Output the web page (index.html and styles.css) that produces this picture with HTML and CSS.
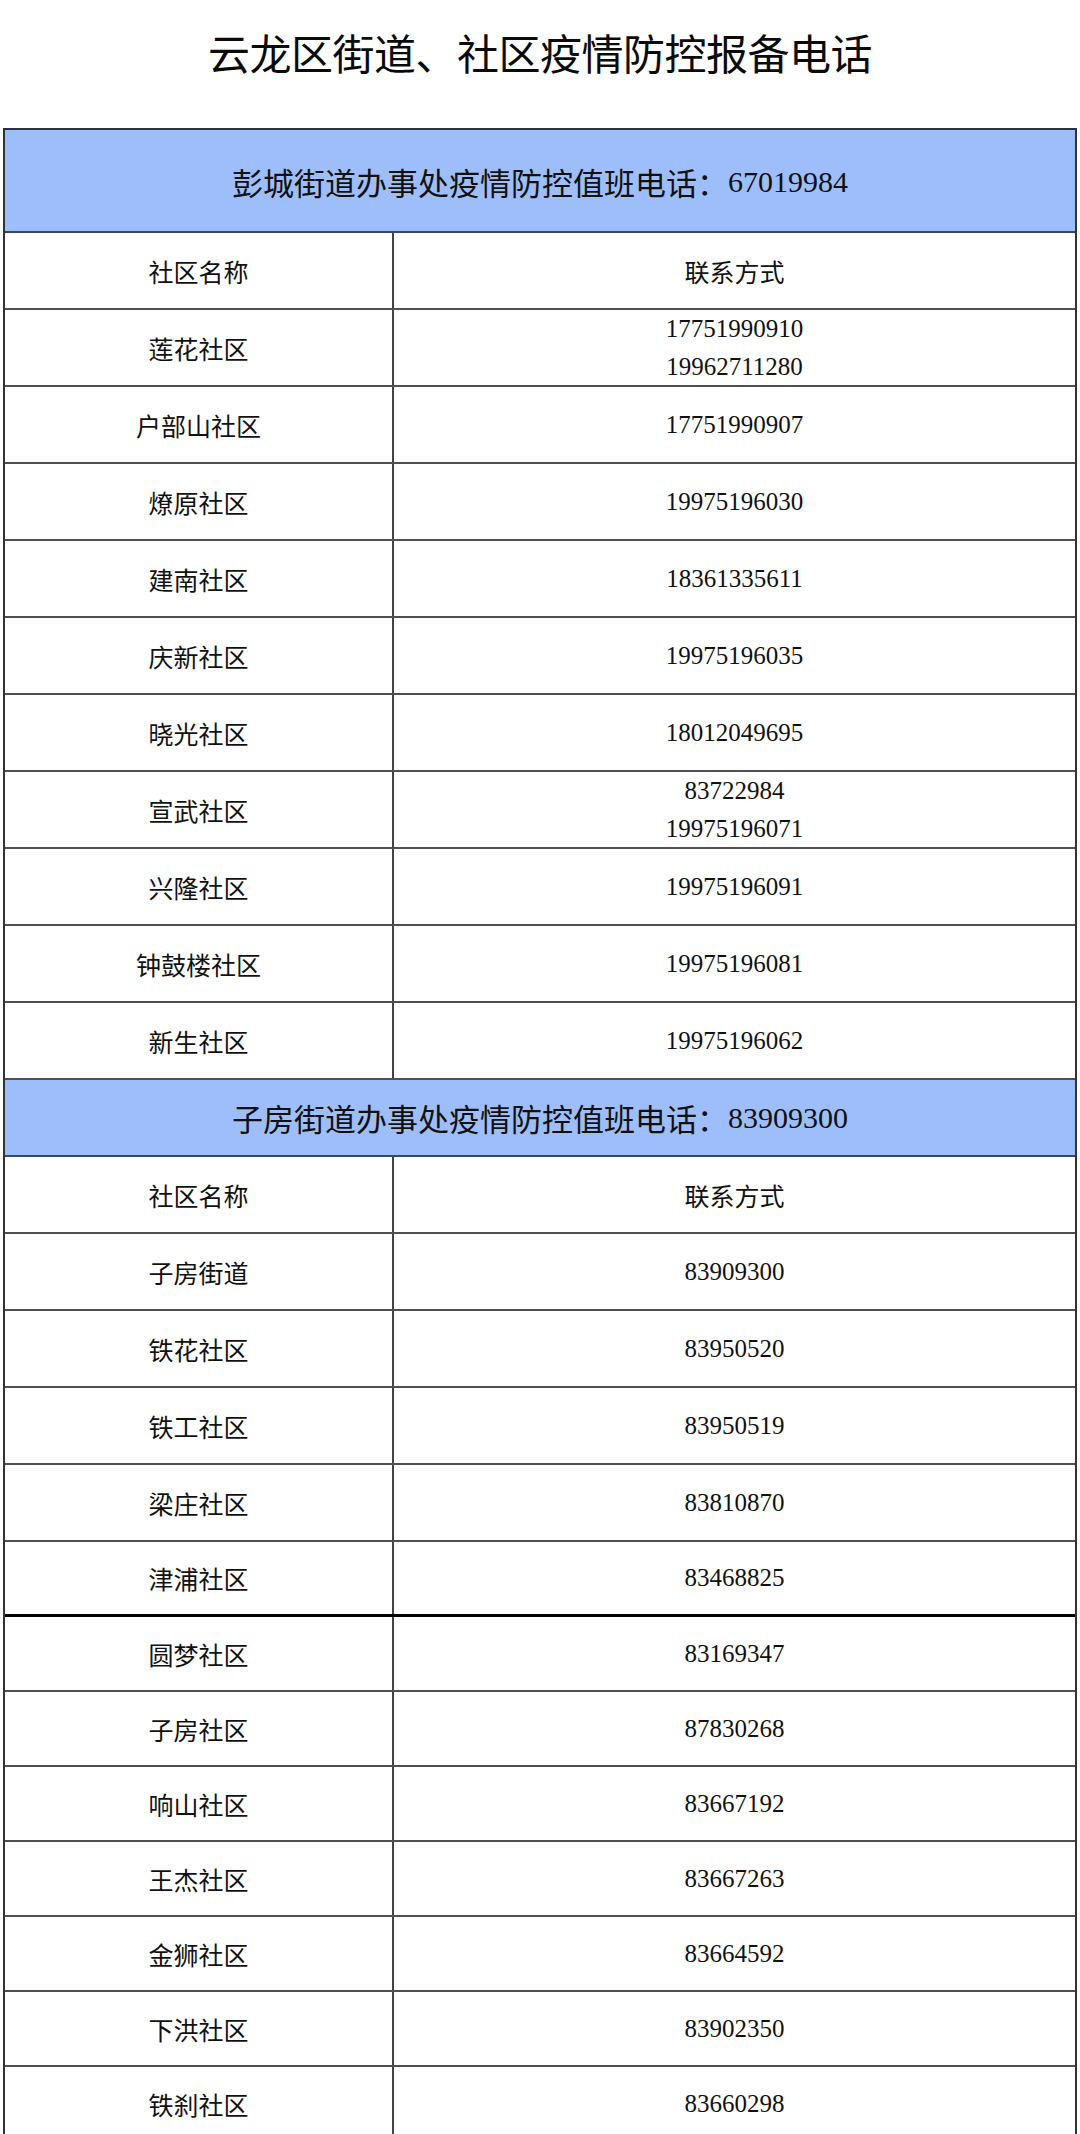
FILE: index.html
```html
<!DOCTYPE html>
<html lang="zh-CN">
<head>
<meta charset="utf-8">
<title>云龙区街道、社区疫情防控报备电话</title>
<link rel="stylesheet" href="styles.css">
</head>
<body>
<h1 class="title">云龙区街道、社区疫情防控报备电话</h1>
<div class="table">
  <div class="section-head first">彭城街道办事处疫情防控值班电话：<span class="num">67019984</span></div>
  <div class="row"><div class="name">社区名称</div><div class="contact cjk">联系方式</div></div>
  <div class="row"><div class="name">莲花社区</div><div class="contact"><span>17751990910</span><span>19962711280</span></div></div>
  <div class="row"><div class="name">户部山社区</div><div class="contact">17751990907</div></div>
  <div class="row"><div class="name">燎原社区</div><div class="contact">19975196030</div></div>
  <div class="row"><div class="name">建南社区</div><div class="contact">18361335611</div></div>
  <div class="row"><div class="name">庆新社区</div><div class="contact">19975196035</div></div>
  <div class="row"><div class="name">晓光社区</div><div class="contact">18012049695</div></div>
  <div class="row"><div class="name">宣武社区</div><div class="contact"><span>83722984</span><span>19975196071</span></div></div>
  <div class="row"><div class="name">兴隆社区</div><div class="contact">19975196091</div></div>
  <div class="row"><div class="name">钟鼓楼社区</div><div class="contact">19975196081</div></div>
  <div class="row"><div class="name">新生社区</div><div class="contact">19975196062</div></div>
  <div class="section-head">子房街道办事处疫情防控值班电话：<span class="num">83909300</span></div>
  <div class="row"><div class="name">社区名称</div><div class="contact cjk">联系方式</div></div>
  <div class="row"><div class="name">子房街道</div><div class="contact">83909300</div></div>
  <div class="row"><div class="name">铁花社区</div><div class="contact">83950520</div></div>
  <div class="row"><div class="name">铁工社区</div><div class="contact">83950519</div></div>
  <div class="row"><div class="name">梁庄社区</div><div class="contact">83810870</div></div>
  <div class="row short thick"><div class="name">津浦社区</div><div class="contact">83468825</div></div>
  <div class="row short"><div class="name">圆梦社区</div><div class="contact">83169347</div></div>
  <div class="row short"><div class="name">子房社区</div><div class="contact">87830268</div></div>
  <div class="row short"><div class="name">响山社区</div><div class="contact">83667192</div></div>
  <div class="row short"><div class="name">王杰社区</div><div class="contact">83667263</div></div>
  <div class="row short"><div class="name">金狮社区</div><div class="contact">83664592</div></div>
  <div class="row short"><div class="name">下洪社区</div><div class="contact">83902350</div></div>
  <div class="row short"><div class="name">铁刹社区</div><div class="contact">83660298</div></div>
</div>
</body>
</html>
```
FILE: styles.css
```css
html, body {
  margin: 0;
  padding: 0;
  background: #ffffff;
  color: #111111;
}

body {
  width: 1080px;
  font-family: "Noto Sans CJK SC", "Noto Sans", sans-serif;
}

.title {
  margin: 0 0 26px 0;
  height: 102px;
  display: flex;
  align-items: center;
  justify-content: center;
  font-size: 42px;
  font-weight: 400;
  letter-spacing: -0.5px;
  color: #0a0a0a;
}

.table {
  margin-left: 3px;
  width: 1074px;
  box-sizing: border-box;
  border-left: 2px solid #333333;
  border-right: 2px solid #333333;
  border-top: 2px solid #2a3040;
}

.section-head {
  height: 77px;
  box-sizing: border-box;
  background: #9ebefb;
  border-bottom: 2px solid #3a4660;
  display: flex;
  align-items: center;
  justify-content: center;
  font-size: 31px;
  color: #111111;
}

.section-head.first {
  height: 103px;
  padding-top: 2px;
}

.num {
  font-family: "Liberation Serif", serif;
  font-size: 30px;
}

.row {
  display: grid;
  grid-template-columns: 389px 1fr;
  height: 77px;
  box-sizing: border-box;
  border-bottom: 2px solid #505050;
}

.row.short {
  height: 75px;
}

.row.thick {
  border-bottom: 3px solid #000000;
}

.name {
  border-right: 2px solid #444444;
  display: flex;
  align-items: center;
  justify-content: center;
  font-size: 25px;
}

.contact {
  display: flex;
  flex-direction: column;
  align-items: center;
  justify-content: center;
  font-family: "Liberation Serif", "Noto Sans CJK SC", serif;
  font-size: 25px;
  line-height: 38px;
}

.contact.cjk {
  font-family: "Noto Sans CJK SC", "Noto Sans", sans-serif;
  line-height: normal;
}
```
